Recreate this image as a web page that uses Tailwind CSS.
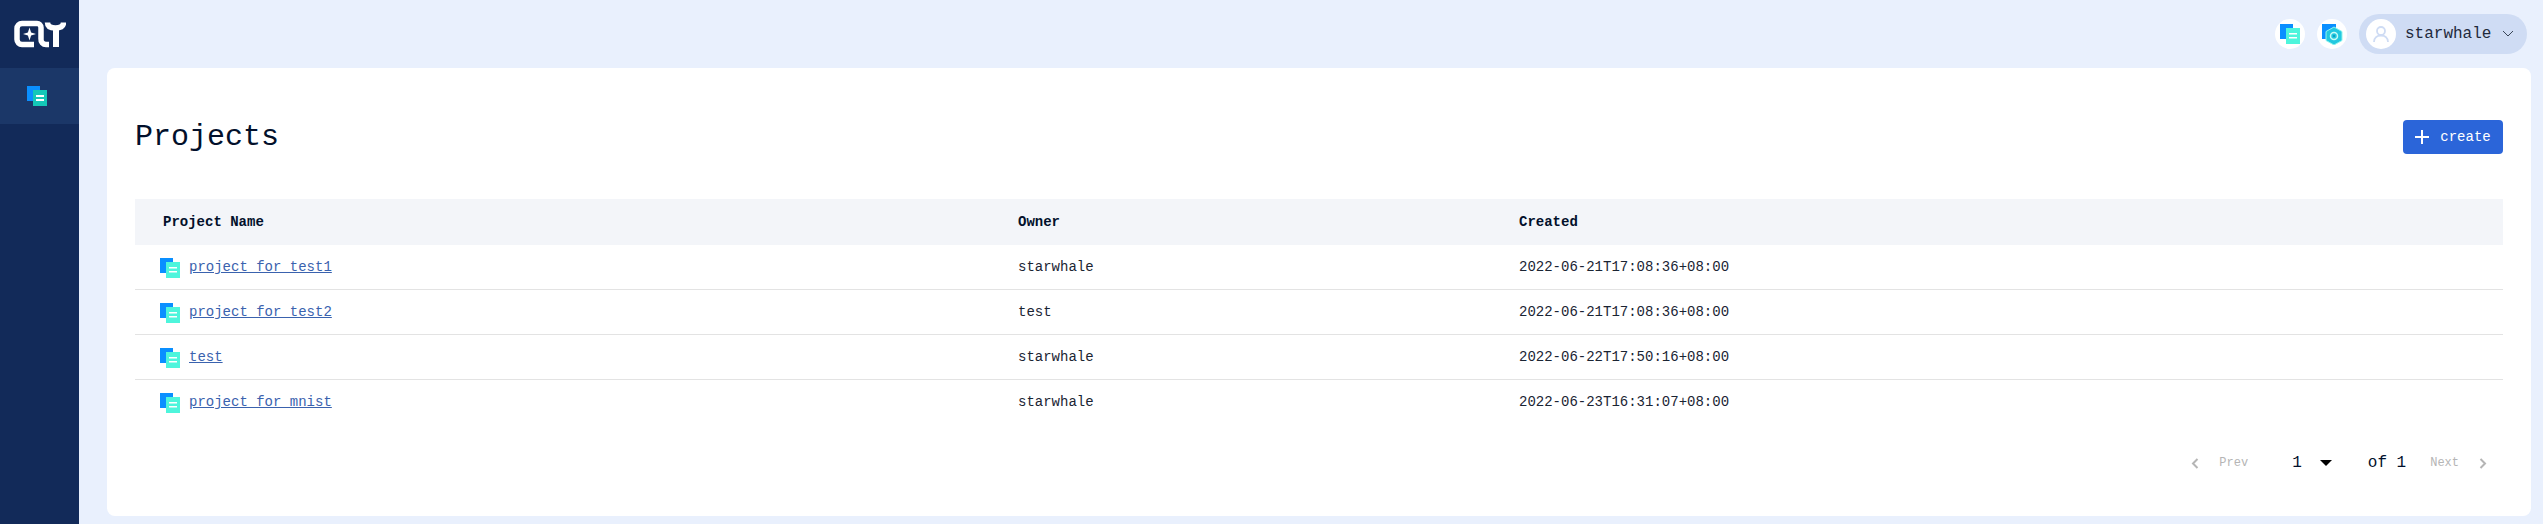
<!DOCTYPE html>
<html lang="en">
<head>
    <meta charset="UTF-8">
    <title>Projects</title>
    <script src="https://cdn.jsdelivr.net/npm/@tailwindcss/browser@4"></script>
</head>
<body class="bg-[#e9f0fd] font-['Liberation_Mono',monospace] overflow-hidden">
    <div class="h-[524px] flex">
        <!-- sidebar -->
        <div class="w-[79px] shrink-0 bg-[#122a59] h-full">
            <div class="h-[68px] flex items-center justify-center">
                <svg width="52" height="28" viewBox="0 0 52 28" fill="none" stroke="#fff" stroke-width="5.500">
                    <path d="M20 24.500H8a5 5 0 0 1-5-5V8.500a5 5 0 0 1 5-5h15a4 4 0 0 1 4 4V19a5 5 0 0 0 5 5.500h3"/>
                    <path d="M15.500 7.500l1.600 4.900 4.900 1.600-4.900 1.600-1.600 4.900-1.600-4.900-4.900-1.600 4.900-1.600z" fill="#fff" stroke="none"/>
                    <path d="M33.500 2.500q0 5.500 8 5.500t8-5.500"/>
                    <path d="M42 7v20" stroke-width="6"/>
                </svg>
            </div>
            <div class="h-[56px] bg-[#1b3768] flex items-center justify-center pr-[5px]">
                <svg width="20" height="20" viewBox="0 0 20 20"><rect x="0" y="0" width="13" height="15" fill="#0a8fff"/><rect x="6" y="4" width="14" height="16" fill="#14c8b8"/><rect x="9" y="9" width="8" height="2" fill="#fff"/><rect x="9" y="13" width="8" height="2" fill="#fff"/></svg>
            </div>
        </div>
        <div class="flex-1 min-w-0 flex flex-col">
            <!-- top bar -->
            <div class="h-[68px] flex items-center justify-end pr-[16px] gap-[12px] shrink-0">
                <div class="w-[30px] h-[30px] rounded-full bg-white flex items-center justify-center">
                    <svg width="20" height="20" viewBox="0 0 20 20"><rect x="0" y="0" width="13" height="15" fill="#0a8fff"/><rect x="6" y="4" width="14" height="16" fill="#4ef5dc"/><rect x="9" y="9" width="8" height="1.500" fill="#fff"/><rect x="9" y="13" width="8" height="1.500" fill="#fff"/></svg>
                </div>
                <div class="w-[30px] h-[30px] rounded-full bg-white flex items-center justify-center">
                    <svg width="21" height="21" viewBox="0 0 21 21"><rect x="0" y="0" width="14" height="15" fill="#0a8fff"/><path d="M12 3l8 4.500v9L12 21l-8-4.500v-9z" fill="#22c8e0" stroke="#8ff5ee" stroke-width="1"/><circle cx="12" cy="12" r="3.500" fill="none" stroke="#c8fbf6" stroke-width="1.500"/><circle cx="12" cy="12" r="1.200" fill="#0f9fc0"/></svg>
                </div>
                <div class="h-[40px] w-[168px] rounded-full bg-[#cfdcf4] flex items-center pl-[7px] gap-[9px]">
                    <div class="w-[30px] h-[30px] rounded-full bg-white flex items-center justify-center">
                        <svg width="18" height="18" viewBox="0 0 18 18" fill="none" stroke="#cfdcf4" stroke-width="1.800"><circle cx="9" cy="6" r="4"/><path d="M2 17c0-4 3-6.500 7-6.500s7 2.500 7 6.500"/></svg>
                    </div>
                    <span class="text-[16px] text-[#1f2a3c]">starwhale</span>
                    <svg width="12" height="8" viewBox="0 0 12 8" fill="none" stroke="#3a4658" stroke-width="1" class="ml-[2px]"><path d="M1 1l5 5 5-5"/></svg>
                </div>
            </div>
            <!-- card -->
            <div class="ml-[28px] mr-[12px] h-[448px] bg-white rounded-[8px] px-[28px]">
                <div class="h-[131px] flex items-center justify-between">
                    <h1 class="text-[30px] text-[#02102b] pt-[7px]">Projects</h1>
                    <button class="w-[100px] h-[34px] mt-[7px] rounded-[4px] bg-[#2b65d9] text-white flex items-center justify-center gap-[11px] text-[14px]">
                        <svg width="14" height="14" viewBox="0 0 14 14" stroke="#fff" stroke-width="2"><path d="M7 0v14M0 7h14"/></svg>
                        create
                    </button>
                </div>
                <table class="w-full table-fixed text-[14px] text-[#1a2433]">
                    <thead>
                        <tr class="h-[46px] bg-[#f3f5f9] font-bold text-left text-[#02102b]">
                            <th class="w-[883px] pl-[28px]">Project Name</th>
                            <th class="w-[501px]">Owner</th>
                            <th>Created</th>
                        </tr>
                    </thead>
                    <tbody>
                        <tr class="h-[44px] border-b border-[#e3e3e3]">
                            <td class="pl-[25px] pt-[2px]">
                                <div class="flex items-center gap-[9px]">
                                    <svg width="20" height="20" viewBox="0 0 20 20"><rect x="0" y="0" width="13" height="15" fill="#0a8fff"/><rect x="6" y="4" width="14" height="16" fill="#4ef5dc"/><rect x="9" y="9" width="8" height="1.500" fill="#fff"/><rect x="9" y="13" width="8" height="1.500" fill="#fff"/></svg>
                                    <a href="#" class="text-[#3a62ae] underline">project for test1</a>
                                </div>
                            </td>
                            <td class="pt-[2px]">starwhale</td>
                            <td class="pt-[2px]">2022-06-21T17:08:36+08:00</td>
                        </tr>
                        <tr class="h-[45px] border-b border-[#e3e3e3]">
                            <td class="pl-[25px] pt-[2px]">
                                <div class="flex items-center gap-[9px]">
                                    <svg width="20" height="20" viewBox="0 0 20 20"><rect x="0" y="0" width="13" height="15" fill="#0a8fff"/><rect x="6" y="4" width="14" height="16" fill="#4ef5dc"/><rect x="9" y="9" width="8" height="1.500" fill="#fff"/><rect x="9" y="13" width="8" height="1.500" fill="#fff"/></svg>
                                    <a href="#" class="text-[#3a62ae] underline">project for test2</a>
                                </div>
                            </td>
                            <td class="pt-[2px]">test</td>
                            <td class="pt-[2px]">2022-06-21T17:08:36+08:00</td>
                        </tr>
                        <tr class="h-[45px] border-b border-[#e3e3e3]">
                            <td class="pl-[25px] pt-[2px]">
                                <div class="flex items-center gap-[9px]">
                                    <svg width="20" height="20" viewBox="0 0 20 20"><rect x="0" y="0" width="13" height="15" fill="#0a8fff"/><rect x="6" y="4" width="14" height="16" fill="#4ef5dc"/><rect x="9" y="9" width="8" height="1.500" fill="#fff"/><rect x="9" y="13" width="8" height="1.500" fill="#fff"/></svg>
                                    <a href="#" class="text-[#3a62ae] underline">test</a>
                                </div>
                            </td>
                            <td class="pt-[2px]">starwhale</td>
                            <td class="pt-[2px]">2022-06-22T17:50:16+08:00</td>
                        </tr>
                        <tr class="h-[45px]">
                            <td class="pl-[25px] pt-[2px]">
                                <div class="flex items-center gap-[9px]">
                                    <svg width="20" height="20" viewBox="0 0 20 20"><rect x="0" y="0" width="13" height="15" fill="#0a8fff"/><rect x="6" y="4" width="14" height="16" fill="#4ef5dc"/><rect x="9" y="9" width="8" height="1.500" fill="#fff"/><rect x="9" y="13" width="8" height="1.500" fill="#fff"/></svg>
                                    <a href="#" class="text-[#3a62ae] underline">project for mnist</a>
                                </div>
                            </td>
                            <td class="pt-[2px]">starwhale</td>
                            <td class="pt-[2px]">2022-06-23T16:31:07+08:00</td>
                        </tr>
                    </tbody>
                </table>
                <!-- pagination -->
                <div class="flex items-center justify-end h-[40px] mt-[19px] pr-[16px] text-[#02102b]">
                    <svg width="8" height="11" viewBox="0 0 8 11" fill="none" stroke="#b5b5b5" stroke-width="2"><path d="M6.500 1L2 5.500 6.500 10"/></svg>
                    <span class="text-[12px] text-[#b5b5b5] ml-[20px]">Prev</span>
                    <span class="text-[16px] ml-[44px]">1</span>
                    <span class="ml-[18px] w-0 h-0 border-x-[6px] border-t-[6px] border-x-transparent border-t-black"></span>
                    <span class="text-[16px] ml-[36px]">of 1</span>
                    <span class="text-[12px] text-[#b5b5b5] ml-[24px]">Next</span>
                    <svg width="8" height="11" viewBox="0 0 8 11" fill="none" stroke="#b5b5b5" stroke-width="2" class="ml-[20px]"><path d="M1.500 1L6 5.500 1.500 10"/></svg>
                </div>
            </div>
        </div>
    </div>
</body>
</html>
